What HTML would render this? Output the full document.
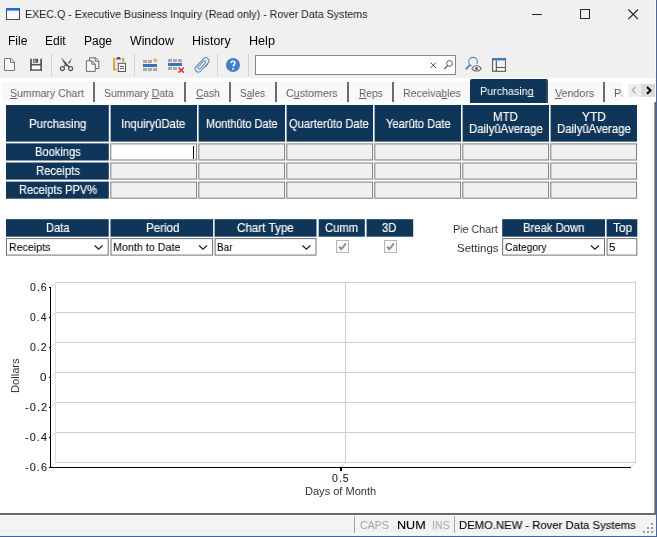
<!DOCTYPE html>
<html>
<head>
<meta charset="utf-8">
<style>
*{box-sizing:border-box;margin:0;padding:0}
html,body{width:657px;height:537px;overflow:hidden;background:#fff}
body{position:relative;font-family:"Liberation Sans",sans-serif;font-size:11px;color:#000}
.abs{position:absolute}
.t{position:absolute;white-space:nowrap;line-height:1;transform-origin:0 0;will-change:transform}
#top{left:0;top:0;width:657px;height:78px;background:#f0f0f0}
.hd{position:absolute;background:#0f3659}
.cell{position:absolute;background:#f0f0f0;border:1px solid #858585;height:18px;width:87px}
.sel{position:absolute;background:#fff;border:1px solid #7a7a7a;height:18px}
.sel svg{position:absolute;right:5px;top:5.5px}
.tsep{position:absolute;top:82px;width:2px;height:20px;background:#6b6b6b}
u{text-decoration:underline;text-underline-offset:1px;text-decoration-skip-ink:none;text-decoration-thickness:1px}
</style>
</head>
<body>
<div id="top" class="abs"></div>
<!-- title bar -->
<svg class="abs" style="left:6px;top:8px" width="15" height="12" viewBox="0 0 15 12"><rect x="0.5" y="0.5" width="13" height="11" fill="#f8f8f8" stroke="#3c4b6b"/><rect x="0" y="0" width="14" height="2.6" fill="#1f6fc9"/></svg>
<svg class="abs" style="left:530px;top:8px" width="120" height="14" viewBox="530 8 120 14">
 <path d="M532 14.5h10" stroke="#222" stroke-width="1" fill="none"/>
 <rect x="580.5" y="9.5" width="9" height="9" stroke="#222" stroke-width="1" fill="none"/>
 <path d="M628.3 9.5l9.7 9.7M638 9.5l-9.7 9.7" stroke="#222" stroke-width="1.1" fill="none"/>
</svg>
<svg class="abs" style="left:0;top:50px" width="657" height="30" viewBox="0 50 657 30">
 <!-- separators -->
 <g fill="#d2d2d2"><rect x="51" y="54" width="1" height="22"/><rect x="134" y="54" width="1" height="22"/><rect x="217" y="54" width="1" height="22"/><rect x="248" y="54" width="1" height="22"/></g>
 <!-- new -->
 <path d="M4.5 58.5H11L14.5 62V70.5H4.5Z" fill="#f9f9f9" stroke="#767676" stroke-width="1"/>
 <path d="M10.5 58.5V62.5H14.5" fill="none" stroke="#767676" stroke-width="1"/>
 <!-- save -->
 <g fill="#575757"><rect x="30.1" y="58.8" width="1.8" height="12"/><rect x="40.2" y="58.8" width="1.8" height="12"/><rect x="30.1" y="63.9" width="11.9" height="1.8"/><rect x="30.1" y="69.2" width="11.9" height="1.6"/><rect x="33.1" y="58.8" width="5" height="3.9"/></g>
 <rect x="31.9" y="65.7" width="8.3" height="3.5" fill="#fdfdfd"/>
 <rect x="34.1" y="59.7" width="1.3" height="2.2" fill="#e6e6e6"/>
 <!-- cut -->
 <g fill="none" stroke="#505050">
  <circle cx="62.4" cy="68.6" r="2" stroke-width="1.1"/><circle cx="70.6" cy="68.6" r="2" stroke-width="1.1"/>
 </g>
 <path d="M61 57.3L64.2 60.4L69.6 66.6L68.4 67.3L65.8 65.6L63.6 62.6Z" fill="#505050"/>
 <path d="M72 58L69.6 63.6L67.8 63Z" fill="#505050"/>
 <path d="M66.6 64.6L64 67.2L63.2 66.4L65.6 63.8Z" fill="#505050"/>
 <!-- copy -->
 <path d="M89.5 57.8H95.5L98.8 61V68.5H89.5Z" fill="#f6f6f6" stroke="#6a6a6a"/>
 <path d="M95.2 57.8V61.2H98.8" fill="none" stroke="#6a6a6a"/>
 <path d="M86.4 60.8H92L95.3 64V71.4H86.4Z" fill="#f8f8f8" stroke="#6a6a6a"/>
 <path d="M91.8 60.8V64.2H95.3" fill="none" stroke="#6a6a6a"/>
 <!-- paste -->
 <path d="M113 58H115.2V68.7H116.8V70.6H113Z" fill="#dca648"/>
 <rect x="122" y="58" width="2.2" height="3.9" fill="#d4a23e"/>
 <path d="M116.2 59.6V58.4L117.4 57H119.7L120.9 58.4V59.6Z" fill="#5b5560"/>
 <rect x="118.3" y="63.3" width="7.2" height="8.2" fill="#fbfbfb" stroke="#555" stroke-width="1"/>
 <path d="M120 66.4H124M120 68.6H124" stroke="#555" stroke-width="1"/>
 <!-- insert row -->
 <g fill="#a9a9a9"><rect x="143" y="60" width="4" height="3"/><rect x="148" y="60" width="4" height="3"/>
  <rect x="143" y="68" width="4" height="3"/><rect x="148" y="68" width="4" height="3"/><rect x="153" y="68" width="4" height="3"/></g>
 <rect x="143" y="64" width="14" height="3" fill="#3b73b9"/>
 <path d="M155.4 58L156 59.6L157.7 59.7L156.4 60.8L156.8 62.4L155.4 61.5L154 62.4L154.4 60.8L153.1 59.7L154.8 59.6Z" fill="#e3a066" stroke="#e3a066" stroke-width="0.3"/>
 <!-- delete row -->
 <g fill="#a9a9a9"><rect x="168" y="59" width="4" height="3"/><rect x="173" y="59" width="4" height="3"/><rect x="178" y="59" width="4" height="3"/>
  <rect x="168" y="67" width="4" height="3"/><rect x="173" y="67" width="4" height="3"/></g>
 <rect x="168" y="63" width="14" height="3" fill="#3b73b9"/>
 <path d="M178.5 67.5L183.8 72.6M183.8 67.5L178.5 72.6" stroke="#d9303a" stroke-width="1.5" fill="none"/>
 <!-- paperclip -->
 <g stroke-linecap="round" fill="none">
  <path d="M198.4 68.8L205.7 60.9" stroke="#5b80ab" stroke-width="7.4"/>
  <path d="M198.4 68.8L205.7 60.9" stroke="#e3eefa" stroke-width="5.4"/>
  <path d="M199.3 67.6L204.4 62" stroke="#5b80ab" stroke-width="3.6"/>
  <path d="M199.3 67.6L204.4 62" stroke="#e8f1fb" stroke-width="1.7"/>
  <path d="M207.6 64.4L205.2 67" stroke="#5b80ab" stroke-width="1"/>
 </g>
 <!-- help -->
 <circle cx="233" cy="65" r="7" fill="#447fc6"/>
 <path d="M231 63C231 60.6 235 60.6 235 63C235 64.6 233.1 64.7 233.1 66.6" fill="none" stroke="#fff" stroke-width="1.5"/>
 <circle cx="233.1" cy="68.9" r="0.95" fill="#fff"/>
 <!-- search box -->
 <rect x="255.5" y="55.5" width="200" height="19" fill="#fff" stroke="#868686"/>
 <path d="M430.5 62.5L436 68M436 62.5L430.5 68" stroke="#555" stroke-width="1" fill="none"/>
 <circle cx="449.5" cy="63.5" r="2.9" fill="none" stroke="#555" stroke-width="1"/>
 <path d="M447.4 65.8L444.3 69" stroke="#555" stroke-width="1.2" fill="none"/>
 <!-- find+eye -->
 <circle cx="473.1" cy="61.7" r="4.3" fill="none" stroke="#5a86be" stroke-width="1.1"/>
 <path d="M470.1 64.8L465.7 69.4" stroke="#4f7fbd" stroke-width="1.7" fill="none"/>
 <ellipse cx="476.6" cy="68.4" rx="4.5" ry="3.2" fill="#fff" stroke="#f0f0f0" stroke-width="2.6"/>
 <path d="M472 68.4C474 64.9 479.2 64.9 481.2 68.4C479.2 71.9 474 71.9 472 68.4Z" fill="#fdfdfd" stroke="#686868" stroke-width="1.1"/>
 <circle cx="476.5" cy="68.5" r="1.5" fill="#5a5560"/>
 <!-- layout -->
 <rect x="492.6" y="58.8" width="12.8" height="12.5" fill="#fbfbfb" stroke="#555" stroke-width="1.1"/>
 <rect x="497" y="60.5" width="8" height="6.5" fill="#f1f1f1"/>
 <rect x="492" y="58.2" width="14" height="2.2" fill="#3e78bf"/>
 <path d="M496.3 60.4V71.3M496.3 67.5H505.4" stroke="#555" stroke-width="1.2" fill="none"/>
</svg>
<!-- tabs -->
<div class="abs" style="left:2px;top:82px;width:620px;height:19px;background:#f8f8f8"></div>
<div class="tsep" style="left:93px"></div>
<div class="tsep" style="left:184px"></div>
<div class="tsep" style="left:229px"></div>
<div class="tsep" style="left:275px"></div>
<div class="tsep" style="left:347px"></div>
<div class="tsep" style="left:392px"></div>
<div class="tsep" style="left:603px"></div>

<div class="abs" style="left:470px;top:79px;width:78px;height:24px;background:#0f3659;border-radius:2px 2px 0 0;border-right:2px solid #39485a"></div>
<div class="abs" style="left:626px;top:84px;width:15px;height:13px;background:#efefef"></div>
<div class="abs" style="left:641px;top:84px;width:15px;height:13px;background:#dadada"></div>
<svg class="abs" style="left:626px;top:83px" width="30" height="14" viewBox="626 83 30 14"><path d="M635.6 86.8L632.2 90.2L635.6 93.6" stroke="#b0b0b0" stroke-width="1.4" fill="none"/><path d="M647 87L650.6 90.4L647 93.8" stroke="#000" stroke-width="2" fill="none"/></svg>
<!-- table -->
<svg class="abs" style="left:0;top:100px" width="657" height="160" viewBox="0 100 657 160">
<g fill="#0f3659">
<rect x="6" y="105" width="102.8" height="36.6"/>
<rect x="110.6" y="105" width="86.4" height="36.6"/>
<rect x="198.6" y="105" width="86.4" height="36.6"/>
<rect x="286.6" y="105" width="86.4" height="36.6"/>
<rect x="374.6" y="105" width="86.4" height="36.6"/>
<rect x="462.6" y="105" width="86.4" height="36.6"/>
<rect x="550.6" y="105" width="86.4" height="36.6"/>
<rect x="6" y="143.4" width="102.8" height="17.1"/>
<rect x="6" y="162.5" width="102.8" height="17.1"/>
<rect x="6" y="181.6" width="102.8" height="17.1"/>
<rect x="6.0" y="219.2" width="102.7" height="17.5"/>
<rect x="110.5" y="219.2" width="102.6" height="17.5"/>
<rect x="214.6" y="219.2" width="101.9" height="17.5"/>
<rect x="318.7" y="219.2" width="46.1" height="17.5"/>
<rect x="366.6" y="219.2" width="46.6" height="17.5"/>
<rect x="502.2" y="219.2" width="102.8" height="17.5"/>
<rect x="606.6" y="219.2" width="30.7" height="17.5"/>
</g>
<rect x="110.8" y="143.9" width="85.8" height="16.1" fill="#fff" stroke="#7d7d7d" stroke-width="1"/>
<rect x="198.8" y="143.9" width="85.8" height="16.1" fill="#f0f0f0" stroke="#7d7d7d" stroke-width="1"/>
<rect x="286.8" y="143.9" width="85.8" height="16.1" fill="#f0f0f0" stroke="#7d7d7d" stroke-width="1"/>
<rect x="374.8" y="143.9" width="85.8" height="16.1" fill="#f0f0f0" stroke="#7d7d7d" stroke-width="1"/>
<rect x="462.8" y="143.9" width="85.8" height="16.1" fill="#f0f0f0" stroke="#7d7d7d" stroke-width="1"/>
<rect x="550.8" y="143.9" width="85.8" height="16.1" fill="#f0f0f0" stroke="#7d7d7d" stroke-width="1"/>
<rect x="110.8" y="163.0" width="85.8" height="16.1" fill="#f0f0f0" stroke="#7d7d7d" stroke-width="1"/>
<rect x="198.8" y="163.0" width="85.8" height="16.1" fill="#f0f0f0" stroke="#7d7d7d" stroke-width="1"/>
<rect x="286.8" y="163.0" width="85.8" height="16.1" fill="#f0f0f0" stroke="#7d7d7d" stroke-width="1"/>
<rect x="374.8" y="163.0" width="85.8" height="16.1" fill="#f0f0f0" stroke="#7d7d7d" stroke-width="1"/>
<rect x="462.8" y="163.0" width="85.8" height="16.1" fill="#f0f0f0" stroke="#7d7d7d" stroke-width="1"/>
<rect x="550.8" y="163.0" width="85.8" height="16.1" fill="#f0f0f0" stroke="#7d7d7d" stroke-width="1"/>
<rect x="110.8" y="182.1" width="85.8" height="16.1" fill="#f0f0f0" stroke="#7d7d7d" stroke-width="1"/>
<rect x="198.8" y="182.1" width="85.8" height="16.1" fill="#f0f0f0" stroke="#7d7d7d" stroke-width="1"/>
<rect x="286.8" y="182.1" width="85.8" height="16.1" fill="#f0f0f0" stroke="#7d7d7d" stroke-width="1"/>
<rect x="374.8" y="182.1" width="85.8" height="16.1" fill="#f0f0f0" stroke="#7d7d7d" stroke-width="1"/>
<rect x="462.8" y="182.1" width="85.8" height="16.1" fill="#f0f0f0" stroke="#7d7d7d" stroke-width="1"/>
<rect x="550.8" y="182.1" width="85.8" height="16.1" fill="#f0f0f0" stroke="#7d7d7d" stroke-width="1"/>
<rect x="6.5" y="238.6" width="101.7" height="16.5" fill="#fff" stroke="#707070" stroke-width="1"/>
<rect x="111.0" y="238.6" width="101.6" height="16.5" fill="#fff" stroke="#707070" stroke-width="1"/>
<rect x="215.1" y="238.6" width="100.9" height="16.5" fill="#fff" stroke="#707070" stroke-width="1"/>
<rect x="502.7" y="238.6" width="101.8" height="16.5" fill="#fff" stroke="#707070" stroke-width="1"/>
<rect x="607.1" y="238.6" width="29.7" height="16.5" fill="#fff" stroke="#707070" stroke-width="1"/>
<path d="M94.6 245.6L98.6 249.2L102.6 245.6" stroke="#222" stroke-width="1.3" fill="none"/>
<path d="M199.0 245.6L203.0 249.2L207.0 245.6" stroke="#222" stroke-width="1.3" fill="none"/>
<path d="M302.4 245.6L306.4 249.2L310.4 245.6" stroke="#222" stroke-width="1.3" fill="none"/>
<path d="M590.9 245.6L594.9 249.2L598.9 245.6" stroke="#222" stroke-width="1.3" fill="none"/>
</svg>


<div class="abs" style="left:193px;top:146px;width:1px;height:13px;background:#000"></div>

<svg class="abs" style="left:336px;top:240px" width="13" height="13" viewBox="0 0 13 13"><rect x="0.5" y="0.5" width="12" height="12" fill="#fafafa" stroke="#b4b4b4"/><path d="M3 6.6L5.3 9.2L10 3.4" stroke="#8e8e8e" stroke-width="1.9" fill="none"/></svg>
<svg class="abs" style="left:384px;top:240px" width="13" height="13" viewBox="0 0 13 13"><rect x="0.5" y="0.5" width="12" height="12" fill="#fafafa" stroke="#b4b4b4"/><path d="M3 6.6L5.3 9.2L10 3.4" stroke="#8e8e8e" stroke-width="1.9" fill="none"/></svg>
<!-- chart -->
<svg class="abs" style="left:0;top:275px" width="657" height="230" viewBox="0 275 657 230" shape-rendering="crispEdges">
 <g stroke="#cecece" stroke-width="1" fill="none">
  <path d="M55.5 282.5H635.5V462.5H55.5"/>
  <path d="M55.5 312.5H635.5M55.5 342.5H635.5M55.5 372.5H635.5M55.5 402.5H635.5M55.5 432.5H635.5"/>
  <path d="M345.5 282.5V462.5"/>
 </g>
 <g stroke="#dcdcdc" stroke-width="1" fill="none" shape-rendering="auto">
  <path d="M55.5 283V462" stroke="#e0e0e0"/>
  <path d="M50.5 287.5L55.5 282.5M50.5 317.5L55.5 312.5M50.5 347.5L55.5 342.5M50.5 377.5L55.5 372.5M50.5 407.5L55.5 402.5M50.5 437.5L55.5 432.5M50.5 467.5L55.5 462.5"/>
  <path d="M340.5 467.5L345.5 462.5M630.5 467.5L635.5 462.5"/>
 </g>
 <g stroke="#000" stroke-width="1" fill="none">
  <path d="M50.5 287V468M49 467.5H631"/>
  <path d="M49 287.5H51M49 317.5H51M49 347.5H51M49 377.5H51M49 407.5H51M49 437.5H51"/>
 </g>
 <rect x="340" y="468" width="2" height="3" fill="#000"/>
</svg>
<div class="t" style="left:10px;top:393.3px;font-size:11px;color:#333;transform:rotate(-90deg) scaleX(1.012)">Dollars</div>
<!-- right border -->
<div class="abs" style="left:655px;top:0;width:1px;height:537px;background:#f6f8fc"></div>
<div class="abs" style="left:654px;top:102px;width:1px;height:412px;background:#9a9a9a"></div>
<div class="abs" style="left:655px;top:102px;width:1px;height:412px;background:#5e6879"></div>
<div class="abs" style="left:656px;top:0;width:1px;height:537px;background:#4d6593"></div>
<!-- status bar -->
<div class="abs" style="left:0;top:513px;width:656px;height:2px;background:#6a6a6a"></div>
<div class="abs" style="left:0;top:515px;width:656px;height:21px;background:#f3f3f3;border-top:1px solid #fff"></div>
<div class="abs" style="left:0;top:529px;width:656px;height:3px;background:#f2f0f7"></div>
<div class="abs" style="left:0;top:532px;width:656px;height:3px;background:#f6f6f3"></div>
<div class="abs" style="left:0;top:535px;width:656px;height:1px;background:#eaf2f9"></div>
<div class="abs" style="left:0;top:536px;width:657px;height:1px;background:#4a6496"></div>
<div class="abs" style="left:354px;top:516px;width:1px;height:17px;background:#a6a6a6"></div>
<div class="abs" style="left:454px;top:516px;width:1px;height:17px;background:#a6a6a6"></div>
<svg class="abs" style="left:640px;top:520px" width="16" height="16" viewBox="640 520 16 16"><g fill="#9c9c9c"><rect x="651" y="523" width="2" height="2"/><rect x="651" y="527" width="2" height="2"/><rect x="647" y="527" width="2" height="2"/><rect x="651" y="531" width="2" height="2"/><rect x="647" y="531" width="2" height="2"/><rect x="643" y="531" width="2" height="2"/></g></svg>
<div class="t" style="left:25.06px;top:9.00px;font-size:11.3px;color:#1a1a1a;transform:scaleX(0.9438)">EXEC.Q - Executive Business Inquiry (Read only) - Rover Data Systems</div>
<div class="t" style="left:7.99px;top:35.00px;font-size:12px;color:#000;transform:scaleX(1.0056)">File</div>
<div class="t" style="left:45.21px;top:35.00px;font-size:12px;color:#000;transform:scaleX(0.9924)">Edit</div>
<div class="t" style="left:84.42px;top:35.00px;font-size:12px;color:#000;transform:scaleX(0.9849)">Page</div>
<div class="t" style="left:130.00px;top:35.00px;font-size:12px;color:#000;transform:scaleX(1.0269)">Window</div>
<div class="t" style="left:192.47px;top:35.00px;font-size:12px;color:#000;transform:scaleX(1.0345)">History</div>
<div class="t" style="left:248.95px;top:35.00px;font-size:12px;color:#000;transform:scaleX(1.0495)">Help</div>
<div class="t" style="left:9.50px;top:88.00px;font-size:11.5px;color:#5e5e5e;transform:scaleX(0.9180)"><u>S</u>ummary Chart</div>
<div class="t" style="left:104.14px;top:88.00px;font-size:11.5px;color:#5e5e5e;transform:scaleX(0.9102)">Summary <u>D</u>ata</div>
<div class="t" style="left:195.90px;top:88.00px;font-size:11.5px;color:#5e5e5e;transform:scaleX(0.8838)"><u>C</u>ash</div>
<div class="t" style="left:240.36px;top:88.00px;font-size:11.5px;color:#5e5e5e;transform:scaleX(0.8714)">S<u>a</u>les</div>
<div class="t" style="left:286.14px;top:88.00px;font-size:11.5px;color:#5e5e5e;transform:scaleX(0.9297)">C<u>u</u>stomers</div>
<div class="t" style="left:358.50px;top:88.00px;font-size:11.5px;color:#5e5e5e;transform:scaleX(0.8868)"><u>R</u>eps</div>
<div class="t" style="left:402.78px;top:88.00px;font-size:11.5px;color:#5e5e5e;transform:scaleX(0.9224)">Receiva<u>b</u>les</div>
<div class="t" style="left:554.70px;top:88.00px;font-size:11.5px;color:#5e5e5e;transform:scaleX(0.9269)"><u>V</u>endors</div>
<div class="t" style="left:480.47px;top:86.00px;font-size:11.5px;color:#fff;transform:scaleX(0.9309)">Purchasin<u>g</u></div>
<div class="t" style="left:613.76px;top:88.00px;font-size:11.5px;color:#5e5e5e;transform:scaleX(0.9434)">Pa</div>
<div class="t" style="left:29.34px;top:117.80px;font-size:12px;color:#fff;-webkit-text-stroke:0.15px #fff;transform:scaleX(0.9562)">Purchasing</div>
<div class="t" style="left:121.22px;top:117.80px;font-size:12px;color:#fff;-webkit-text-stroke:0.15px #fff;transform:scaleX(0.9464)">Inquiry&ucirc;Date</div>
<div class="t" style="left:205.89px;top:117.80px;font-size:12px;color:#fff;-webkit-text-stroke:0.15px #fff;transform:scaleX(0.9100)">Month&ucirc;to Date</div>
<div class="t" style="left:289.40px;top:117.80px;font-size:12px;color:#fff;-webkit-text-stroke:0.15px #fff;transform:scaleX(0.9286)">Quarter&ucirc;to Date</div>
<div class="t" style="left:385.94px;top:117.80px;font-size:12px;color:#fff;-webkit-text-stroke:0.15px #fff;transform:scaleX(0.9285)">Year&ucirc;to Date</div>
<div class="t" style="left:493.04px;top:111.00px;font-size:12px;color:#fff;-webkit-text-stroke:0.15px #fff;transform:scaleX(0.9567)">MTD</div>
<div class="t" style="left:468.55px;top:123.00px;font-size:12px;color:#fff;-webkit-text-stroke:0.15px #fff;transform:scaleX(0.9482)">Daily&ucirc;Average</div>
<div class="t" style="left:582.30px;top:111.00px;font-size:12px;color:#fff;-webkit-text-stroke:0.15px #fff;transform:scaleX(0.9934)">YTD</div>
<div class="t" style="left:556.75px;top:123.00px;font-size:12px;color:#fff;-webkit-text-stroke:0.15px #fff;transform:scaleX(0.9482)">Daily&ucirc;Average</div>
<div class="t" style="left:34.67px;top:145.60px;font-size:12px;color:#fff;-webkit-text-stroke:0.15px #fff;transform:scaleX(0.9271)">Bookings</div>
<div class="t" style="left:35.56px;top:164.60px;font-size:12px;color:#fff;-webkit-text-stroke:0.15px #fff;transform:scaleX(0.9414)">Receipts</div>
<div class="t" style="left:18.58px;top:183.60px;font-size:12px;color:#fff;-webkit-text-stroke:0.15px #fff;transform:scaleX(0.9213)">Receipts PPV%</div>
<div class="t" style="left:45.68px;top:221.80px;font-size:12px;color:#fff;-webkit-text-stroke:0.15px #fff;transform:scaleX(0.9237)">Data</div>
<div class="t" style="left:145.64px;top:221.80px;font-size:12px;color:#fff;-webkit-text-stroke:0.15px #fff;transform:scaleX(0.9649)">Period</div>
<div class="t" style="left:237.27px;top:221.80px;font-size:12px;color:#fff;-webkit-text-stroke:0.15px #fff;transform:scaleX(0.9694)">Chart Type</div>
<div class="t" style="left:324.80px;top:221.80px;font-size:12px;color:#fff;-webkit-text-stroke:0.15px #fff;transform:scaleX(0.9363)">Cumm</div>
<div class="t" style="left:382.03px;top:221.80px;font-size:12px;color:#fff;-webkit-text-stroke:0.15px #fff;transform:scaleX(0.9333)">3D</div>
<div class="t" style="left:523.46px;top:221.80px;font-size:12px;color:#fff;-webkit-text-stroke:0.15px #fff;transform:scaleX(0.9402)">Break Down</div>
<div class="t" style="left:612.55px;top:221.80px;font-size:12px;color:#fff;-webkit-text-stroke:0.15px #fff;transform:scaleX(0.9838)">Top</div>
<div class="t" style="left:8.82px;top:240.70px;font-size:11.7px;color:#0a0a0a;-webkit-text-stroke:0.1px #0a0a0a;transform:scaleX(0.9079)">Receipts</div>
<div class="t" style="left:113.01px;top:240.70px;font-size:11.7px;color:#0a0a0a;-webkit-text-stroke:0.1px #0a0a0a;transform:scaleX(0.9176)">Month to Date</div>
<div class="t" style="left:217.36px;top:240.70px;font-size:11.7px;color:#0a0a0a;-webkit-text-stroke:0.1px #0a0a0a;transform:scaleX(0.8514)">Bar</div>
<div class="t" style="left:504.56px;top:240.70px;font-size:11.7px;color:#0a0a0a;-webkit-text-stroke:0.1px #0a0a0a;transform:scaleX(0.8766)">Category</div>
<div class="t" style="left:609.00px;top:240.70px;font-size:11.7px;color:#0a0a0a;-webkit-text-stroke:0.1px #0a0a0a;transform:scaleX(1.0000)">5</div>
<div class="t" style="left:452.77px;top:223.50px;font-size:11.5px;color:#333;transform:scaleX(0.9319)">Pie Chart</div>
<div class="t" style="left:457.21px;top:242.50px;font-size:11.5px;color:#333;transform:scaleX(0.9890)">Settings</div>
<div class="t" style="left:29.94px;top:282.80px;font-size:10px;color:#1c1c1c;letter-spacing:1px;-webkit-text-stroke:0.1px #1c1c1c;transform:scaleX(1.0492)">0.6</div>
<div class="t" style="left:29.94px;top:312.80px;font-size:10px;color:#1c1c1c;letter-spacing:1px;-webkit-text-stroke:0.1px #1c1c1c;transform:scaleX(1.0323)">0.4</div>
<div class="t" style="left:29.94px;top:342.80px;font-size:10px;color:#1c1c1c;letter-spacing:1px;-webkit-text-stroke:0.1px #1c1c1c;transform:scaleX(1.0492)">0.2</div>
<div class="t" style="left:40.11px;top:372.80px;font-size:10px;color:#1c1c1c;letter-spacing:1px;-webkit-text-stroke:0.1px #1c1c1c;transform:scaleX(1.1600)">0</div>
<div class="t" style="left:24.53px;top:402.80px;font-size:10px;color:#1c1c1c;letter-spacing:1px;-webkit-text-stroke:0.1px #1c1c1c;transform:scaleX(1.0974)">-0.2</div>
<div class="t" style="left:24.53px;top:432.80px;font-size:10px;color:#1c1c1c;letter-spacing:1px;-webkit-text-stroke:0.1px #1c1c1c;transform:scaleX(1.0835)">-0.4</div>
<div class="t" style="left:24.53px;top:462.80px;font-size:10px;color:#1c1c1c;letter-spacing:1px;-webkit-text-stroke:0.1px #1c1c1c;transform:scaleX(1.0835)">-0.6</div>
<div class="t" style="left:331.94px;top:473.70px;font-size:10px;color:#1c1c1c;letter-spacing:1px;-webkit-text-stroke:0.1px #1c1c1c;transform:scaleX(1.0492)">0.5</div>
<div class="t" style="left:304.70px;top:485.90px;font-size:11px;color:#333;transform:scaleX(1.0036)">Days of Month</div>
<div class="t" style="left:359.84px;top:519.60px;font-size:11.4px;color:#a3a3a3;transform:scaleX(0.9233)">CAPS</div>
<div class="t" style="left:397.17px;top:519.60px;font-size:11.4px;color:#000;-webkit-text-stroke:0.12px #000;transform:scaleX(1.1052)">NUM</div>
<div class="t" style="left:431.87px;top:519.60px;font-size:11.4px;color:#a3a3a3;transform:scaleX(0.9257)">INS</div>
<div class="t" style="left:459.26px;top:519.60px;font-size:11.4px;color:#000;-webkit-text-stroke:0.1px #000;transform:scaleX(0.9904)">DEMO.NEW - Rover Data Systems</div>

<div class="abs" style="left:622px;top:82px;width:6px;height:19px;background:linear-gradient(90deg,rgba(255,255,255,.6),#fff 40%)"></div>
</body>
</html>
